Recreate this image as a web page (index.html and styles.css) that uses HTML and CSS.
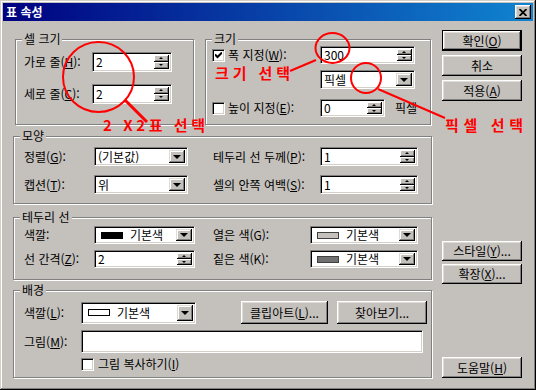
FILE: index.html
```html
<!DOCTYPE html>
<html lang="ko">
<head>
    <meta charset="UTF-8">
    <meta name="viewport" content="width=device-width, initial-scale=1.0">
    <title>표 속성</title>
    <link rel="stylesheet" href="styles.css">
</head>
<body>

<div class="window">
    <div class="titlebar">
        <span class="title">표 속성</span>
        <span class="close">
            <svg width="8" height="7" viewBox="0 0 8 7"><path d="M0.5 0L7.5 7M7.5 0L0.5 7" stroke="#000" stroke-width="1.8"/></svg>
        </span>
    </div>

    <div class="dialog">
        <div class="main">
            <div class="top-row">
                <!-- 셀 크기 -->
                <div class="group g-cell">
                    <span class="legend">셀 크기</span>
                    <div class="form">
                        <label>가로 줄(<u>H</u>):</label>
                        <div class="field"><span class="val">2</span><span class="spin"><i class="up"></i><i class="down"></i></span></div>
                        <label>세로 줄(<u>C</u>):</label>
                        <div class="field"><span class="val">2</span><span class="spin"><i class="up"></i><i class="down"></i></span></div>
                    </div>
                </div>

                <!-- 크기 -->
                <div class="group g-size">
                    <span class="legend">크기</span>
                    <div class="row">
                        <span class="opt">
                            <span class="check"><svg width="7" height="7" viewBox="0 0 7 7"><path d="M0 2.5L2.5 5L7 0.5" fill="none" stroke="#000" stroke-width="2"/></svg></span>
                            <label>폭 지정(<u>W</u>):</label>
                        </span>
                        <div class="field w95"><span class="val">300</span><span class="spin"><i class="up"></i><i class="down"></i></span></div>
                    </div>
                    <div class="row r2">
                        <div class="field select w95"><span class="val">픽셀</span><span class="arrow"></span></div>
                    </div>
                    <div class="row r3">
                        <span class="opt">
                            <span class="check"></span>
                            <label>높이 지정(<u>E</u>):</label>
                        </span>
                        <div class="field w65"><span class="val">0</span><span class="spin"><i class="up"></i><i class="down"></i></span></div>
                        <span class="unit">픽셀</span>
                    </div>
                </div>
            </div>

            <!-- 모양 -->
            <div class="group g-shape">
                <span class="legend">모양</span>
                <div class="form">
                    <label>정렬(<u>G</u>):</label>
                    <div class="field select"><span class="val">(기본값)</span><span class="arrow"></span></div>
                    <label>테두리 선 두께(<u>P</u>):</label>
                    <div class="field"><span class="val">1</span><span class="spin"><i class="up"></i><i class="down"></i></span></div>
                    <label>캡션(<u>T</u>):</label>
                    <div class="field select"><span class="val">위</span><span class="arrow"></span></div>
                    <label>셀의 안쪽 여백(<u>S</u>):</label>
                    <div class="field"><span class="val">1</span><span class="spin"><i class="up"></i><i class="down"></i></span></div>
                </div>
            </div>

            <!-- 테두리 선 -->
            <div class="group g-border">
                <span class="legend">테두리 선</span>
                <div class="form">
                    <label>색깔:</label>
                    <div class="field select"><span class="swatch black"></span><span class="val">기본색</span><span class="arrow"></span></div>
                    <label>열은 색(G):</label>
                    <div class="field select wide"><span class="swatch light"></span><span class="val">기본색</span><span class="arrow"></span></div>
                    <label>선 간격(<u>Z</u>):</label>
                    <div class="field"><span class="val">2</span><span class="spin"><i class="up"></i><i class="down"></i></span></div>
                    <label>짙은 색(K):</label>
                    <div class="field select wide"><span class="swatch dark"></span><span class="val">기본색</span><span class="arrow"></span></div>
                </div>
            </div>

            <!-- 배경 -->
            <div class="group g-bg">
                <span class="legend">배경</span>
                <div class="row">
                    <label class="lbl">색깔(<u>L</u>):</label>
                    <div class="field select color"><span class="swatch white"></span><span class="val">기본색</span><span class="arrow"></span></div>
                    <span class="btn clip">클립아트(<u>L</u>)...</span>
                    <span class="btn browse">찾아보기...</span>
                </div>
                <div class="row r2">
                    <label class="lbl">그림(<u>M</u>):</label>
                    <div class="field picture"></div>
                </div>
                <div class="row r3">
                    <span class="check"></span>
                    <label>그림 복사하기(<u>I</u>)</label>
                </div>
            </div>
        </div>

        <div class="side">
            <span class="btn default">확인(<u>O</u>)</span>
            <span class="btn">취소</span>
            <span class="btn">적용(<u>A</u>)</span>
            <span class="btn style">스타일(<u>Y</u>)...</span>
            <span class="btn">확장(<u>X</u>)...</span>
            <span class="btn help">도움말(<u>H</u>)</span>
        </div>
    </div>

    <!-- 빨간 표시 -->
    <svg class="notes" width="536" height="390" viewBox="0 0 536 390">
        <g fill="none" stroke="#ff0000" stroke-width="2">
            <ellipse cx="98.5" cy="77" rx="35.5" ry="35"/>
            <path d="M125 100L147 122" stroke-width="3"/>
            <ellipse cx="332.5" cy="48" rx="17" ry="15"/>
            <path d="M290 71L316 60"/>
            <ellipse cx="366" cy="78" rx="15" ry="15"/>
            <path d="M378 89L445 118"/>
        </g>
        <g fill="#ff0000" font-weight="bold" font-size="15">
            <text x="103" y="131" textLength="102">2 X2표 선택</text>
            <text x="215" y="79" textLength="75">크기 선택</text>
            <text x="445" y="131" textLength="78">픽셀 선택</text>
        </g>
    </svg>
</div>

</body>
</html>
```

FILE: styles.css
```css
/* 기본 */
* {
    margin: 0;
    padding: 0;
    box-sizing: border-box;
}

body {
    font-family: "Noto Sans CJK KR", "Noto Sans", sans-serif;
    font-size: 12px;
    line-height: 14px;
    color: #000;
    background: #c4c0bc;
}

u {
    text-decoration: underline;
    text-underline-offset: 1px;
}

label {
    white-space: nowrap;
}

/* 창 */
.window {
    position: relative;
    width: 536px;
    height: 390px;
    padding: 3px;
    background: #c4c0bc;
    box-shadow: inset -1px -1px #000, inset 1px 1px #d4d0c8, inset -2px -2px #808080, inset 2px 2px #fff;
}

.titlebar {
    height: 18px;
    display: flex;
    align-items: center;
    padding: 0 2px 0 3px;
    background: linear-gradient(90deg, #000080, #1084d0);
    color: #fff;
    font-weight: bold;
}

.close {
    margin-left: auto;
    width: 16px;
    height: 14px;
    display: flex;
    align-items: center;
    justify-content: center;
    background: #c4c0bc;
    box-shadow: inset -1px -1px #000, inset 1px 1px #fff, inset -2px -2px #808080, inset 2px 2px #dfdbd7;
}

.dialog {
    display: flex;
}

.main {
    width: 419px;
    margin: 18px 0 0 10px;
}

.side {
    width: 80px;
    margin: 9px 0 0 10px;
    display: flex;
    flex-direction: column;
}

/* 버튼 */
.btn {
    height: 21px;
    display: flex;
    align-items: center;
    justify-content: center;
    white-space: nowrap;
    background: #c4c0bc;
    box-shadow: inset -1px -1px #000, inset 1px 1px #fff, inset -2px -2px #808080, inset 2px 2px #dfdbd7;
}

.btn.default {
    border: 1px solid #000;
}

.side .btn + .btn {
    margin-top: 4px;
}

.side .btn.style {
    margin-top: 140px;
    height: 20px;
}

.side .btn.style + .btn {
    margin-top: 3px;
    height: 20px;
}

.side .btn.help {
    margin-top: 73px;
}

/* 그룹 상자 */
.group {
    position: relative;
    border: 1px solid #808080;
    box-shadow: 1px 1px #fff, inset 1px 1px #fff;
}

.legend {
    position: absolute;
    top: -8px;
    left: 6px;
    padding: 0 2px;
    background: #c4c0bc;
}

.top-row {
    display: flex;
    gap: 11px;
    margin-left: 2px;
}

/* 입력 칸 */
.field {
    display: flex;
    align-items: center;
    background: #fff;
    border: 1px solid;
    border-color: #808080 #fff #fff #808080;
    box-shadow: inset 1px 1px #000, inset -1px -1px #d4d0c8;
    padding: 2px;
}

.val {
    flex: 1;
    padding-left: 1px;
    white-space: nowrap;
    line-height: 16px;
}

.spin {
    width: 15px;
    align-self: stretch;
    display: flex;
    flex-direction: column;
}

.spin i {
    flex: 1;
    position: relative;
    background: #c4c0bc;
    box-shadow: inset -1px -1px #000, inset 1px 1px #fff, inset -2px -2px #808080;
}

.spin i::after {
    content: "";
    position: absolute;
    left: 5px;
    top: 2px;
    border-left: 2px solid transparent;
    border-right: 2px solid transparent;
}

.spin i.up::after {
    border-bottom: 2px solid #000;
}

.spin i.down::after {
    border-top: 2px solid #000;
}

.arrow {
    width: 16px;
    align-self: stretch;
    position: relative;
    background: #c4c0bc;
    box-shadow: inset -1px -1px #000, inset 1px 1px #dfdbd7, inset -2px -2px #808080, inset 2px 2px #fff;
}

.arrow::after {
    content: "";
    position: absolute;
    left: 4px;
    top: calc(50% - 2px);
    border-left: 4px solid transparent;
    border-right: 4px solid transparent;
    border-top: 4px solid #000;
}

.check {
    flex: none;
    width: 13px;
    height: 13px;
    display: flex;
    align-items: center;
    justify-content: center;
    background: #fff;
    border: 1px solid;
    border-color: #808080 #fff #fff #808080;
    box-shadow: inset 1px 1px #000, inset -1px -1px #d4d0c8;
}

.swatch {
    flex: none;
    width: 22px;
    height: 7px;
    margin: 0 6px 0 4px;
    border: 1px solid #000;
}

.swatch.black { background: #000; }
.swatch.light { background: #c4c0bc; border-color: #404040; }
.swatch.dark { background: #707070; border-color: #404040; }
.swatch.white { background: #fff; }

/* 셀 크기 */
.g-cell {
    width: 179px;
    height: 86px;
    padding: 12px 0 0 8px;
}

.g-cell .form {
    display: grid;
    grid-template-columns: 68px 80px;
    grid-auto-rows: 20px;
    row-gap: 12px;
    align-items: center;
}

.g-cell .field {
    height: 20px;
}

/* 크기 */
.g-size {
    width: 226px;
    height: 86px;
    padding: 6px 0 0 6px;
}

.g-size .row {
    display: flex;
    align-items: center;
    height: 18px;
}

.g-size .row .field {
    height: 100%;
}

.g-size .r2 {
    margin-top: 6px;
    height: 19px;
    padding-left: 108px;
}

.g-size .r3 {
    margin-top: 10px;
}

.opt {
    width: 108px;
    display: flex;
    align-items: center;
    gap: 3px;
}

.w95 { width: 95px; }
.w65 { width: 65px; }

.unit {
    margin-left: 10px;
}

/* 모양 */
.g-shape {
    margin-top: 11px;
    height: 68px;
    padding: 10px 0 0 10px;
}

.g-shape .form {
    display: grid;
    grid-template-columns: 70px 119px 107px 98px;
    grid-auto-rows: 19px;
    row-gap: 9px;
    align-items: center;
}

.g-shape .field {
    height: 19px;
}

.g-shape .select {
    width: 94px;
}

/* 테두리 선 */
.g-border {
    margin-top: 13px;
    height: 63px;
    padding: 8px 0 0 10px;
}

.g-border .form {
    display: grid;
    grid-template-columns: 70px 119px 97px 108px;
    grid-auto-rows: 18px;
    row-gap: 6px;
    align-items: center;
}

.g-border .field {
    height: 18px;
    width: 101px;
}

.g-border .field.wide {
    width: 108px;
}

/* 배경 */
.g-bg {
    margin-top: 10px;
    height: 88px;
    padding: 10px 0 0 10px;
}

.g-bg .row {
    display: flex;
    align-items: center;
}

.g-bg .lbl {
    width: 57px;
}

.g-bg .color {
    width: 115px;
    height: 22px;
}

.g-bg .btn {
    height: 23px;
}

.g-bg .clip {
    width: 87px;
    margin-left: 45px;
}

.g-bg .browse {
    width: 90px;
    margin-left: 9px;
}

.g-bg .r2 {
    margin-top: 6px;
}

.g-bg .picture {
    width: 342px;
    height: 23px;
}

.g-bg .r3 {
    margin-top: 4px;
    padding-left: 57px;
    gap: 4px;
}

/* 빨간 표시 */
.notes {
    position: absolute;
    top: 0;
    left: 0;
    pointer-events: none;
    font-family: "Noto Sans CJK KR", sans-serif;
}
```
